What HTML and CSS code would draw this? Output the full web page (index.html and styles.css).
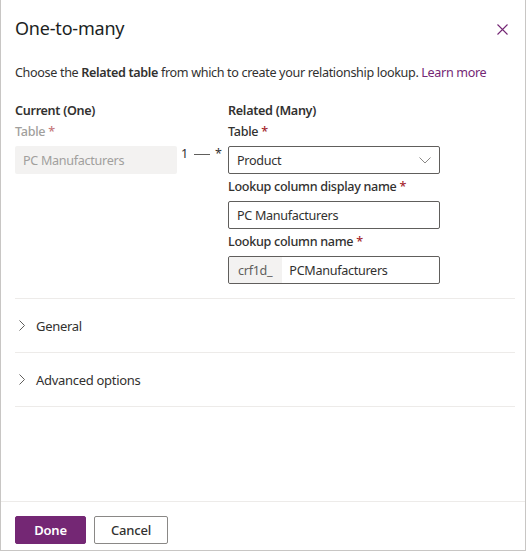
FILE: index.html
```html
<!DOCTYPE html>
<html>
<head>
<meta charset="utf-8">
<link rel="stylesheet" href="styles.css">
</head>
<body>
<div class="dialog">
  <div class="header">
    <h1 class="title">One-to-many</h1>
    <button class="close" aria-label="Close">
      <svg width="11" height="11" viewBox="0 0 11 11"><path d="M0.5 0.5 L10.5 10.5 M10.5 0.5 L0.5 10.5" stroke="#742774" stroke-width="1.1" fill="none"/></svg>
    </button>
  </div>
  <p class="desc">Choose the <b>Related table</b> from which to create your relationship lookup. <a class="link" href="#">Learn more</a></p>
  <div class="columns">
    <div class="col left">
      <div class="heading">Current (One)</div>
      <div class="label first disabled">Table <span class="req">*</span></div>
      <div class="input readonly">PC Manufacturers</div>
    </div>
    <div class="connector"><span>1</span><span class="dash"></span><span>*</span></div>
    <div class="col right">
      <div class="heading">Related (Many)</div>
      <div class="label first">Table <span class="req">*</span></div>
      <div class="input select">
        <span>Product</span>
        <svg width="12" height="7" viewBox="0 0 12 7"><path d="M0.5 0.5 L6 6 L11.5 0.5" stroke="#8a8886" stroke-width="1" fill="none"/></svg>
      </div>
      <div class="label">Lookup column display name <span class="req">*</span></div>
      <div class="input">PC Manufacturers</div>
      <div class="label">Lookup column name <span class="req">*</span></div>
      <div class="input prefixed">
        <span class="prefix">crf1d_</span>
        <span class="value">PCManufacturers</span>
      </div>
    </div>
  </div>
  <div class="sections">
    <div class="section">
      <svg class="chev" width="6" height="11" viewBox="0 0 6 11"><path d="M0.5 0.5 L5.5 5.5 L0.5 10.5" stroke="#605e5c" stroke-width="1" fill="none"/></svg>
      <span>General</span>
    </div>
    <div class="section">
      <svg class="chev" width="6" height="11" viewBox="0 0 6 11"><path d="M0.5 0.5 L5.5 5.5 L0.5 10.5" stroke="#605e5c" stroke-width="1" fill="none"/></svg>
      <span>Advanced options</span>
    </div>
  </div>
  <div class="footer">
    <button class="btn primary">Done</button>
    <button class="btn">Cancel</button>
  </div>
</div>
</body>
</html>
```
FILE: styles.css
```css
* { box-sizing: border-box; }
html, body { margin: 0; padding: 0; background: #fff; }
body {
  font-family: "Noto Sans", "Open Sans", sans-serif;
  font-size: 12.6px;
  letter-spacing: -0.3px;
  color: #323130;
}
.dialog {
  width: 526px;
  height: 551px;
  border: 1px solid #c8c6c4;
  border-top: none;
  display: flex;
  flex-direction: column;
}
.header {
  display: flex;
  align-items: center;
  justify-content: space-between;
  padding: 14px 15px 0 14px;
  height: 42px;
}
.title {
  margin: 0;
  font-size: 18px;
  font-weight: 400;
  line-height: 28px;
  letter-spacing: -0.2px;
  color: #201f1e;
}
.close {
  border: none;
  background: none;
  padding: 0;
  margin-right: 2px;
  display: flex;
  margin-top: 2px;
}
.desc {
  margin: 21px 0 0 0;
  padding: 0 14px;
  line-height: 20px;
  white-space: nowrap;
  letter-spacing: -0.35px;
}
.desc b { font-weight: 600; }
.link { color: #742774; text-decoration: none; }
.columns {
  display: flex;
  padding: 0 14px;
  margin-top: 18px;
}
.col.left { width: 162px; }
.col.right { width: 212px; }
.connector {
  width: 51px;
  padding-top: 43px;
  padding-left: 4px;
  line-height: 20px;
  height: 63px;
  display: flex;
  align-items: flex-start;
  color: #323130;
}
.connector .dash {
  width: 16px;
  height: 1px;
  background: #605e5c;
  margin: 10px 5px 0 6px;
}
.heading {
  font-weight: 600;
  line-height: 20px;
}
.label {
  font-weight: 500;
  line-height: 20px;
  margin: 3px 0 4px;
}
.label.first { margin-top: 1px; }
.label.disabled { color: #a19f9d; }
.req { color: #a4262c; }
.label.disabled .req { color: #c6777b; }
.input {
  height: 28px;
  border: 1px solid #605e5c;
  border-radius: 2px;
  padding: 0 8px;
  display: flex;
  align-items: center;
}
.input.readonly {
  border: none;
  background: #f3f2f1;
  color: #a19f9d;
}
.input.select { justify-content: space-between; padding-right: 8px; }
.input.prefixed { padding: 0; }
.prefix {
  background: #f3f2f1;
  color: #605e5c;
  height: 100%;
  display: flex;
  align-items: center;
  padding: 0 10px 0 9px;
  border-radius: 2px 0 0 2px;
}
.value { padding-left: 7px; }
.sections {
  margin: 14px 10px 0 14px;
  border-top: 1px solid #edebe9;
}
.section {
  height: 54px;
  border-bottom: 1px solid #edebe9;
  display: flex;
  align-items: center;
  font-size: 13px;
}
.chev { margin-left: 4px; margin-right: 11px; }
.footer {
  margin-top: auto;
  border-top: 1px solid #edebe9;
  padding: 14px 14px 6px;
  display: flex;
  gap: 8px;
}
.btn {
  height: 28px;
  width: 74px;
  border: 1px solid #8a8886;
  border-radius: 2px;
  background: #fff;
  color: #323130;
  font-family: inherit;
  font-size: 13px;
  letter-spacing: -0.2px;
  font-weight: 500;
  padding: 0;
}
.btn.primary {
  width: 71px;
  background: #742774;
  border-color: #742774;
  color: #fff;
  font-weight: 600;
}
```
